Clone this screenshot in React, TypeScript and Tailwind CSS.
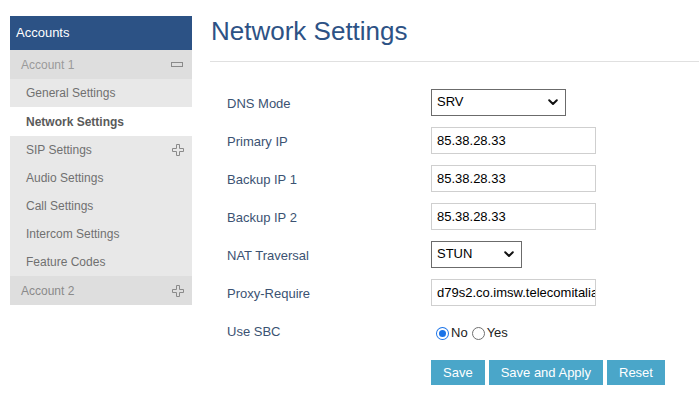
import React from "react";

const font = { fontFamily: '"Liberation Sans", Arial, sans-serif' };

function PlusIcon() {
  return (
    <svg width="12" height="12" viewBox="0 0 12 12" className="shrink-0">
      <path
        d="M4.5 0.5 H7.5 V4.5 H11.5 V7.5 H7.5 V11.5 H4.5 V7.5 H0.5 V4.5 H4.5 Z"
        fill="none"
        stroke="#8a8a8a"
        strokeWidth="1"
      />
    </svg>
  );
}

function MinusIcon() {
  return (
    <svg width="12" height="5" viewBox="0 0 12 5" className="shrink-0">
      <rect x="0.5" y="0.5" width="11" height="4" fill="none" stroke="#8a8a8a" strokeWidth="1" />
    </svg>
  );
}

function Chevron() {
  return (
    <svg width="10" height="7" viewBox="0 0 10 7">
      <path d="M1.2 1.3 L5 5 L8.8 1.3" fill="none" stroke="#111" strokeWidth="2" strokeLinecap="round" strokeLinejoin="round" />
    </svg>
  );
}

function SelectBox({ value, width }: { value: string; width: string }) {
  return (
    <div
      className={`${width} h-[27px] border border-[#6b6b6b] bg-white flex items-center justify-between pl-[5px] pr-[7px] text-[13px] text-black`}
    >
      <span>{value}</span>
      <Chevron />
    </div>
  );
}

function TextBox({ value }: { value: string }) {
  return (
    <input
      readOnly
      value={value}
      className="block w-[165px] h-[27px] border border-[#cfcfcf] bg-white pl-[5px] pr-0 text-[13px] text-black outline-none"
      style={font}
    />
  );
}

function Row({ label, children }: { label: string; children: React.ReactNode }) {
  return (
    <div className="flex items-center h-[38px]">
      <div className="w-[204px] text-[13px] text-[#3b5272] pt-[4px]">{label}</div>
      <div>{children}</div>
    </div>
  );
}

function Radio({ checked }: { checked: boolean }) {
  return checked ? (
    <span className="inline-flex w-[13px] h-[13px] rounded-full bg-[#1a73e8] items-center justify-center">
      <span className="w-[11px] h-[11px] rounded-full bg-white flex items-center justify-center">
        <span className="w-[7px] h-[7px] rounded-full bg-[#1a73e8]" />
      </span>
    </span>
  ) : (
    <span className="inline-block w-[13px] h-[13px] rounded-full border border-[#707070] bg-white" />
  );
}

export default function App() {
  const items = ["SIP Settings", "Audio Settings", "Call Settings", "Intercom Settings", "Feature Codes"];
  return (
    <div className="w-[699px] h-[398px] bg-white flex overflow-hidden" style={font}>
      <aside className="ml-[10px] mt-[16px] w-[182px] flex flex-col">
        <div className="h-[34px] bg-[#2c5285] text-white text-[13px] flex items-center pl-[6px]">Accounts</div>
        <div className="h-[29px] bg-[#dedede] text-[#9a9a9a] text-[12px] flex items-center justify-between pl-[11px] pr-[9px]">
          <span>Account 1</span>
          <MinusIcon />
        </div>
        <div className="h-[28px] bg-[#e8e8e8] text-[#707070] text-[12px] flex items-center pl-[16px]">General Settings</div>
        <div className="h-[29px] bg-white text-[#5a5a5a] text-[12px] font-bold flex items-center pl-[16px]">Network Settings</div>
        <div className="bg-[#e8e8e8] flex flex-col">
          {items.map((it, i) => (
            <div key={it} className="h-[28px] text-[#707070] text-[12px] flex items-center justify-between pl-[16px] pr-[8px]">
              <span>{it}</span>
              {i === 0 && <PlusIcon />}
            </div>
          ))}
        </div>
        <div className="h-[29px] bg-[#dedede] text-[#8a8a8a] text-[12px] flex items-center justify-between pl-[11px] pr-[8px]">
          <span>Account 2</span>
          <PlusIcon />
        </div>
      </aside>
      <main className="ml-[18px] flex-1 flex flex-col">
        <h1 className="mt-[14px] text-[26px] leading-[34px] text-[#2d5285] pl-[1px]">Network Settings</h1>
        <div className="mt-[13px] h-px bg-[#e0e0e0]" />
        <div className="mt-[21px] pl-[17px] flex flex-col">
          <Row label="DNS Mode">
            <SelectBox value="SRV" width="w-[135px]" />
          </Row>
          <Row label="Primary IP">
            <TextBox value="85.38.28.33" />
          </Row>
          <Row label="Backup IP 1">
            <TextBox value="85.38.28.33" />
          </Row>
          <Row label="Backup IP 2">
            <TextBox value="85.38.28.33" />
          </Row>
          <Row label="NAT Traversal">
            <SelectBox value="STUN" width="w-[91px]" />
          </Row>
          <Row label="Proxy-Require">
            <TextBox value="d79s2.co.imsw.telecomitalia.it" />
          </Row>
          <Row label="Use SBC">
            <div className="flex items-center text-[13px] text-[#222] pl-[5px] pt-[6px]">
              <Radio checked />
              <span className="ml-[2px]">No</span>
              <span className="ml-[4px] flex items-center"><Radio checked={false} /></span>
              <span className="ml-[2px]">Yes</span>
            </div>
          </Row>
          <div className="flex gap-[4px] pl-[204px] mt-[11px]">
            <div className="h-[25px] px-[12px] bg-[#4aa6c9] text-white text-[13px] flex items-center">Save</div>
            <div className="h-[25px] px-[12px] bg-[#4aa6c9] text-white text-[13px] flex items-center">Save and Apply</div>
            <div className="h-[25px] px-[12px] bg-[#4aa6c9] text-white text-[13px] flex items-center">Reset</div>
          </div>
        </div>
      </main>
    </div>
  );
}
